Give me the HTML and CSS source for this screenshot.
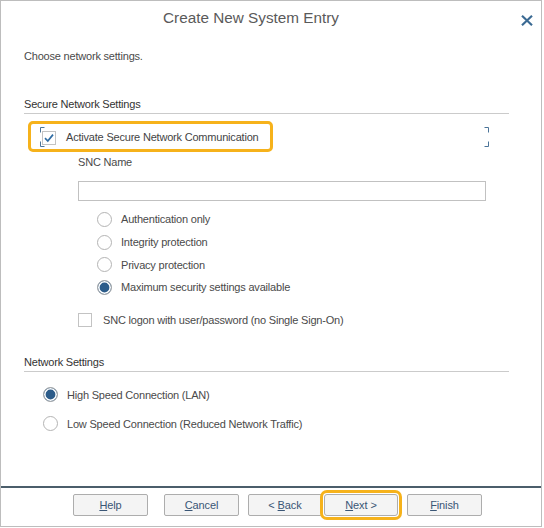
FILE: index.html
```html
<!DOCTYPE html>
<html lang="en">
<head>
<meta charset="utf-8">
<title>Create New System Entry</title>
<link rel="stylesheet" href="styles.css">
</head>
<body>
<div class="dialog">
  <header class="hdr">
    <div class="title">Create New System Entry</div>
    <button class="close" aria-label="Close">
      <svg width="12" height="11" viewBox="0 0 12 11"><path d="M1 0.8 L11 10.2 M11 0.8 L1 10.2" stroke="#3b6a93" stroke-width="2.2" fill="none"/></svg>
    </button>
  </header>
  <main class="content">
    <p class="intro">Choose network settings.</p>
    <h2 class="section">Secure Network Settings</h2>
    <div class="snc-row">
      <div class="hilite">
        <svg class="bracket" width="5" height="20" viewBox="0 0 5 20"><path d="M4.5 0.5 H0.5 V5.5 M0.5 14.5 V19.5 H4.5" stroke="#4b7499" stroke-width="1" fill="none"/></svg>
        <span class="cb first">
          <svg width="14" height="14" viewBox="0 0 14 14"><path d="M3 7.2 L5.8 10 L11 3.6" stroke="#2f6ca3" stroke-width="1.7" fill="none"/></svg>
        </span>
        <span class="cb-label">Activate Secure Network Communication</span>
      </div>
      <svg class="bracket right" width="5" height="20" viewBox="0 0 5 20"><path d="M0.5 0.5 H4.5 V5.5 M4.5 14.5 V19.5 H0.5" stroke="#4b7499" stroke-width="1" fill="none"/></svg>
    </div>
    <div class="sub">
      <div class="field-label">SNC Name</div>
      <input class="input" type="text" value="">
      <ul class="radios snc">
        <li><span class="radio"></span><span>Authentication only</span></li>
        <li><span class="radio"></span><span>Integrity protection</span></li>
        <li><span class="radio"></span><span>Privacy protection</span></li>
        <li><span class="radio on"></span><span>Maximum security settings available</span></li>
      </ul>
      <div class="check-row"><span class="cb"></span><span class="cb-text">SNC logon with user/password (no Single Sign-On)</span></div>
    </div>
    <h2 class="section net">Network Settings</h2>
    <ul class="radios netr">
      <li><span class="radio on"></span><span>High Speed Connection (LAN)</span></li>
      <li><span class="radio"></span><span>Low Speed Connection (Reduced Network Traffic)</span></li>
    </ul>
  </main>
  <footer class="ftr">
    <button class="btn b-help"><u>H</u>elp</button>
    <button class="btn b-cancel"><u>C</u>ancel</button>
    <button class="btn b-back">&lt; <u>B</u>ack</button>
    <button class="btn b-next"><u>N</u>ext &gt;</button>
    <button class="btn b-finish"><u>F</u>inish</button>
  </footer>
</div>
</body>
</html>
```

FILE: styles.css
```css
* { box-sizing: border-box; }
html, body { margin: 0; padding: 0; background: #fff; }
body {
  font-family: "Liberation Sans", Arial, sans-serif;
  font-size: 11px;
  letter-spacing: -0.2px;
  color: #4a4a4a;
}
.dialog {
  width: 542px;
  height: 527px;
  border: 1px solid #bdbdbd;
  display: flex;
  flex-direction: column;
  background: #fff;
}
.hdr {
  height: 36px;
  display: grid;
  grid-template-columns: 1fr 40px;
  align-items: center;
}
.title {
  text-align: center;
  font-size: 15.3px;
  letter-spacing: 0;
  color: #5a5a5a;
  line-height: 20px;
  margin-top: -2px;
}
.close {
  border: 0;
  background: none;
  padding: 0;
  margin: 2px 0 0 20px;
  width: 12px;
  height: 11px;
  display: block;
}
.close svg { display: block; }
.content {
  flex: 1;
  padding-left: 23px;
  padding-right: 32px;
}
.intro {
  margin: 11px 0 0;
  line-height: 16px;
  color: #4a4a4a;
}
.section {
  margin: 32px 0 0;
  font-size: 11px;
  font-weight: normal;
  line-height: 16px;
  color: #333;
  padding-bottom: 1px;
  border-bottom: 1px solid #cbcbcb;
}
.snc-row {
  margin: 7px 0 0 4px;
  width: 461px;
  display: flex;
  align-items: center;
  justify-content: space-between;
}
.hilite {
  width: 245px;
  height: 31px;
  border: 3px solid #f6b21b;
  border-radius: 5px;
  padding-left: 9px;
  display: flex;
  align-items: center;
}
.bracket { display: block; flex: none; }
.cb {
  width: 14px;
  height: 14px;
  border: 1px solid #c3c3c3;
  background: #fff;
  flex: none;
  display: block;
  position: relative;
}
.cb svg { display: block; margin: -1px 0 0 -1px; }
.cb.first { margin-left: -3px; margin-top: 2px; }
.cb-label { margin-left: 10px; color: #444; }
.sub { padding-left: 54px; }
.field-label {
  margin-top: 2px;
  line-height: 16px;
}
.input {
  display: block;
  margin-top: 11px;
  width: 408px;
  height: 20px;
  border: 1px solid #c1c1c1;
  padding: 0;
  font: inherit;
  outline: none;
}
.radios { list-style: none; margin: 0; padding: 0; }
.radios li {
  display: flex;
  align-items: center;
}
.radios.snc { margin-top: 7px; padding-left: 19px; }
.radios.snc li { height: 22.7px; }
.radio {
  width: 15px;
  height: 15px;
  border: 1px solid #b4b4b4;
  border-radius: 50%;
  background: #fff;
  flex: none;
  margin-right: 9px;
}
.radio.on {
  background: #2c5c8a;
  box-shadow: inset 0 0 0 1.6px #fff;
  border-color: #a9a9a9;
}
.check-row {
  margin-top: 12px;
  height: 18px;
  display: flex;
  align-items: center;
}
.cb-text { margin-left: 11px; }
.section.net { margin-top: 25px; }
.radios.netr { margin-top: 8.5px; padding-left: 19px; }
.radios.netr li { height: 29px; }
.ftr {
  height: 40px;
  border-top: 2px solid #4b5e6b;
  padding: 6px 0 0 72px;
  display: flex;
  align-items: flex-start;
}
.btn {
  height: 22px;
  width: 75px;
  border: 1px solid #adadad;
  border-radius: 2px;
  background: #f4f4f4;
  font-family: "Liberation Sans", Arial, sans-serif;
  font-size: 11px;
  letter-spacing: -0.1px;
  color: #3a5676;
  padding: 0;
  line-height: 20px;
}
.btn u { text-decoration-thickness: 1px; text-underline-offset: 1px; }
.b-help { margin-right: 16px; }
.b-cancel { margin-right: 9px; }
.b-back { width: 74px; margin-right: 2px; }
.b-next {
  width: 74px;
  margin-right: 9px;
  box-shadow: 0 0 0 1px #fff, 0 0 0 4px #f6b21b;
  border-radius: 3px;
}
```
